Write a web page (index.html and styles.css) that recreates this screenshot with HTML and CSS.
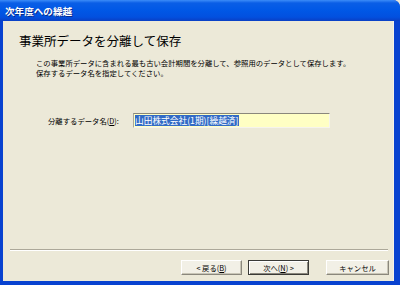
FILE: index.html
```html
<!DOCTYPE html>
<html lang="ja">
<head>
<meta charset="utf-8">
<link rel="stylesheet" href="styles.css">
</head>
<body>
<div class="window">
  <div class="titlebar"><span class="title">次年度への繰越</span></div>
  <div class="content">
    <div class="header">
      <h1 class="heading">事業所データを分離して保存</h1>
      <p class="desc">この事業所データに含まれる最も古い会計期間を分離して、参照用のデータとして保存します。<br>保存するデータ名を指定してください。</p>
    </div>
    <div class="field-row">
      <label class="field-label">分離するデータ名(<u>D</u>):</label>
      <div class="textbox"><span class="selected">山田株式会社(1期)[繰越済]</span></div>
    </div>
    <div class="spacer"></div>
    <div class="separator"></div>
    <div class="buttons">
      <div class="btn">&lt; 戻る(<u>B</u>)</div>
      <div class="btn btn-default">次へ(<u>N</u>) &gt;</div>
      <div class="btn btn-cancel">キャンセル</div>
    </div>
  </div>
</div>
</body>
</html>
```
FILE: styles.css
```css
html, body {
  margin: 0;
  padding: 0;
  background: #ECE9D8;
}
body {
  font-family: "Noto Sans CJK JP", "DejaVu Sans", sans-serif;
}
.window {
  width: 400px;
  height: 285px;
  display: flex;
  flex-direction: column;
  background: #0842d0;
  overflow: hidden;
  border-top-right-radius: 7px;
}
.titlebar {
  height: 21px;
  flex: none;
  display: flex;
  align-items: center;
  padding-left: 5px;
  background: linear-gradient(#3c8cf8 0px, #0a5ee6 3px, #0058e6 10px, #0250df 17px, #0a3fc4 21px);
}
.title {
  color: #ffffff;
  font-weight: bold;
  font-size: 9.6px;
  line-height: 12px;
  text-shadow: 1px 1px 0 #0a2a8a;
}
.content {
  flex: 1;
  margin: 0 6px 4px 3px;
  background: #ECE9D8;
  display: flex;
  flex-direction: column;
  border-right: 1px solid #f4f2ea;
}
.header {
  padding: 13px 0 0 16px;
}
.heading {
  margin: 0;
  font-size: 12.5px;
  line-height: 14px;
  font-weight: normal;
  color: #000;
}
.desc {
  margin: 10px 0 0 17px;
  font-size: 7.35px;
  line-height: 10px;
  color: #000;
}
.field-row {
  margin-top: 35px;
  display: flex;
  align-items: center;
  height: 15px;
  padding-left: 45px;
}
.field-label {
  width: 85px;
  font-size: 7.35px;
  line-height: 10px;
  color: #000;
}
.textbox {
  width: 194px;
  height: 13px;
  background: #FFFFC4;
  border-top: 1px solid #8a877c;
  border-left: 1px solid #a9a79c;
  border-right: 1px solid #f6f4ec;
  border-bottom: 1px solid #f6f4ec;
  display: flex;
  align-items: center;
  padding-left: 1px;
}
.selected {
  background: #316AC5;
  color: #fff;
  font-size: 8.7px;
  line-height: 11px;
  padding-right: 1px;
}
.spacer {
  flex: 1;
}
.separator {
  margin: 0 5px 0 7px;
  border-top: 1px solid #aca899;
  border-bottom: 1px solid #ffffff;
}
.buttons {
  margin: 9px 4px 6px 0;
  display: flex;
  justify-content: flex-end;
  height: 15px;
}
.btn {
  box-sizing: border-box;
  width: 61px;
  height: 15px;
  display: flex;
  align-items: center;
  justify-content: center;
  font-size: 7.35px;
  line-height: 10px;
  color: #000;
  background: #F2F0E6;
  border-top: 1px solid #ffffff;
  border-left: 1px solid #ffffff;
  border-right: 1px solid #8a877c;
  border-bottom: 1px solid #8a877c;
  box-shadow: inset -1px -1px 0 #c8c5b6;
}
.btn-default {
  margin-left: 6px;
  border: 1px solid #3a3a36;
  box-shadow: inset 1px 1px 0 #ffffff, inset -1px -1px 0 #8a877c;
}
.btn-cancel {
  margin-left: 17px;
  width: 63px;
}
```
